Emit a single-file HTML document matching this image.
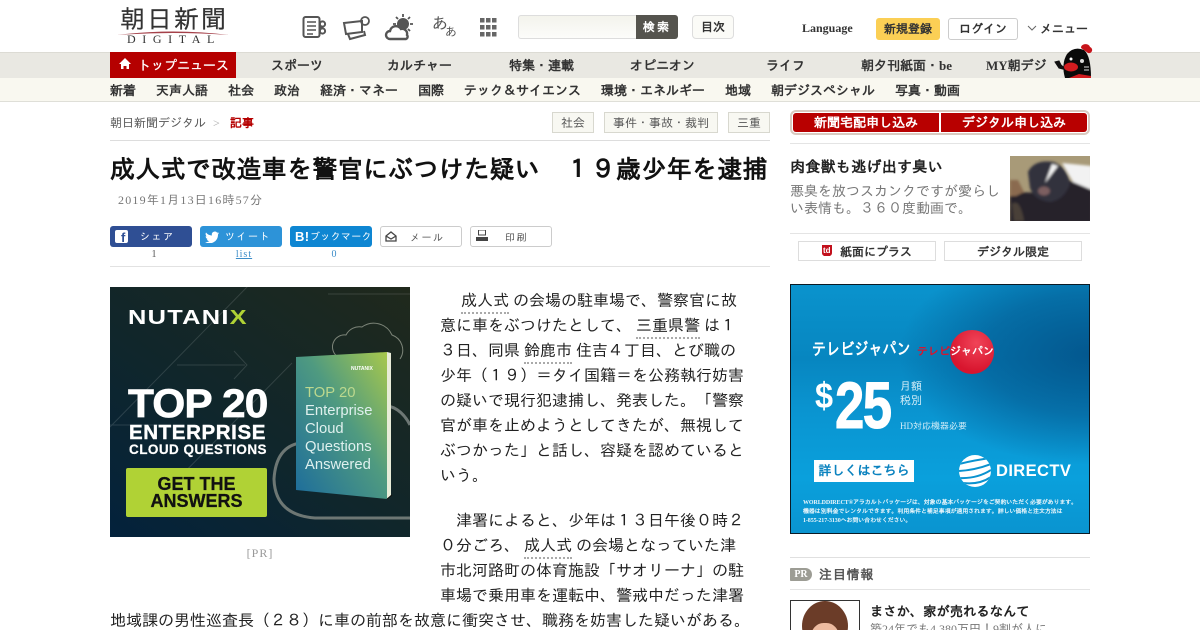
<!DOCTYPE html>
<html lang="ja"><head><meta charset="utf-8"><title>成人式で改造車を警官にぶつけた疑い</title>
<style>
html{margin:0;padding:0;width:1200px;height:630px;overflow:hidden;background:#fff}
body{margin:0;padding:0;width:1200px;height:630px;overflow:hidden;background:#fff;position:relative;font-family:"Liberation Serif","IPAGothic",serif;color:#222}
.a{position:absolute;white-space:nowrap}
.c{text-align:center}
u{text-decoration:none;border-bottom:2px dotted #aaa;padding-bottom:2px}
.btn{position:absolute;top:226px;width:82px;height:21px;border-radius:3px;color:#fff;font-size:10px;line-height:24px;box-sizing:border-box;letter-spacing:1.5px}
.nv1{position:absolute;top:52px;height:25px;line-height:27px;font-size:13px;font-weight:bold;color:#333;white-space:nowrap}
.nv2{position:absolute;top:78px;height:23px;line-height:25px;font-size:13px;font-weight:bold;color:#333;white-space:nowrap}
.tag{position:absolute;top:112px;height:19px;line-height:21px;border:1px solid #d8d8cf;background:#f8f8f2;font-size:12px;color:#555;text-align:center;box-sizing:content-box}
</style></head><body>

<!-- header logo -->
<div class="a" style="left:120px;top:6px;font-size:25px;line-height:30px;color:#333;letter-spacing:2px;-webkit-text-stroke:.2px #333">朝日新聞</div>
<svg class="a" style="left:116px;top:28px" width="114" height="10"><path d="M1 7Q57 0 113 7Q57 3 1 7Z" fill="#a5414a"/></svg>
<div class="a" style="left:127px;top:32px;font-size:12px;line-height:14px;letter-spacing:6.600px;color:#333">DIGITAL</div>

<!-- icons -->
<svg class="a" style="left:300px;top:12px" width="210" height="30" fill="none" stroke="#555" stroke-width="2">
<rect x="3.500" y="5" width="16" height="20" rx="2"/>
<path d="M7 10h9M7 14h9M7 18h9M7 22h6" stroke-width="1.600"/>
<circle cx="22.500" cy="12" r="2.600"/><circle cx="22.500" cy="19" r="2.600"/><path d="M19 15.500h4"/>
<path d="M44 11L62 9V20L46 22z" stroke-width="2"/><path d="M48 22l2 5 15-4-1-4" stroke-width="2"/><circle cx="65" cy="9" r="4" stroke-width="1.800"/>
<circle cx="103" cy="12" r="6" fill="#555" stroke="none"/>
<path d="M103 2v3M113 12h-3M110 5l-2 2M110 19l-2-2M96 5l2 2M93 12h3" stroke-width="1.800"/>
<path d="M90 27a4 4 0 0 1 0-8 6 6 0 0 1 11-2 5 5 0 0 1 6 6 2.500 2.500 0 0 1-1 4z" fill="#fff" stroke-width="2.400"/>
<g fill="#666" stroke="none"><rect x="180" y="6" width="4.500" height="4.500"/><rect x="186" y="6" width="4.500" height="4.500"/><rect x="192" y="6" width="4.500" height="4.500"/><rect x="180" y="13" width="4.500" height="4.500"/><rect x="186" y="13" width="4.500" height="4.500"/><rect x="192" y="13" width="4.500" height="4.500"/><rect x="180" y="20" width="4.500" height="4.500"/><rect x="186" y="20" width="4.500" height="4.500"/><rect x="192" y="20" width="4.500" height="4.500"/></g>
</svg>
<div class="a" style="left:432px;top:15px;font-size:16px;line-height:20px;color:#555">あ</div>
<div class="a" style="left:445px;top:25px;font-size:12px;line-height:15px;color:#555">あ</div>

<!-- search -->
<div class="a" style="left:518px;top:15px;width:119px;height:24px;border:1px solid #ddd;border-right:0;border-radius:3px 0 0 3px;background:linear-gradient(#f3f3ec,#fcfcfa);box-sizing:border-box"></div>
<div class="a c" style="left:636px;top:15px;width:42px;height:24px;background:#55544e;border-radius:0 3px 3px 0;color:#fff;font-size:12px;font-weight:bold;line-height:24px;letter-spacing:2px">検索</div>
<div class="a c" style="left:692px;top:15px;width:42px;height:24px;box-sizing:border-box;border:1px solid #ddd;border-radius:4px;background:#fbfbf7;font-size:12px;font-weight:bold;line-height:23px;color:#333">目次</div>
<div class="a" style="left:802px;top:20px;font-size:12px;font-weight:bold;line-height:16px;color:#333">Language</div>
<div class="a c" style="left:876px;top:18px;width:64px;height:22px;background:#fbcf55;border-radius:3px;font-size:12px;font-weight:bold;line-height:23px;color:#333">新規登録</div>
<div class="a c" style="left:948px;top:18px;width:70px;height:22px;box-sizing:border-box;border:1px solid #ccc;border-radius:3px;font-size:12px;font-weight:bold;line-height:21px;color:#333">ログイン</div>
<svg class="a" style="left:1027px;top:25px" width="10" height="7" fill="none" stroke="#666"><path d="M1 1l4 4 4-4"/></svg>
<div class="a" style="left:1040px;top:20px;font-size:12px;font-weight:bold;line-height:18px;color:#333">メニュー</div>

<!-- nav 1 -->
<div class="a" style="left:0;top:52px;width:1200px;height:26px;background:#e9e8e2;border-top:1px solid #dcdbd4;box-sizing:border-box"></div>
<div class="a" style="left:110px;top:52px;width:126px;height:26px;background:#b50000"></div>
<svg class="a" style="left:119px;top:58px" width="12" height="12"><path d="M6 0L12 6H10V11H7.500V8H4.500V11H2V6H0Z" fill="#fff"/></svg>
<div class="nv1" style="left:138px;color:#fff;font-weight:normal;-webkit-text-stroke:.3px #fff">トップニュース</div>
<div class="nv1" style="left:271px">スポーツ</div>
<div class="nv1" style="left:387px">カルチャー</div>
<div class="nv1" style="left:509px">特集・連載</div>
<div class="nv1" style="left:630px">オピニオン</div>
<div class="nv1" style="left:766px">ライフ</div>
<div class="nv1" style="left:861px">朝夕刊紙面・be</div>
<div class="nv1" style="left:986px">MY朝デジ</div>
<svg class="a" style="left:1052px;top:42px" width="42" height="36"><path d="M13 36Q9 22 15 12Q22 4 32 8Q39 14 39 36Z" fill="#0a0a0a"/><path d="M29 6a4 3 0 0 1 9-1 3 3 0 0 1-2 6" fill="#c7141a"/><path d="M3 20l4 6 8 2-6-5-2-4z" fill="#111" stroke="#111"/><ellipse cx="19" cy="25" rx="7" ry="4.500" fill="#d21c1f"/><path d="M17 36l10-4 12 2v2z" fill="#d21c1f"/><circle cx="19" cy="17" r="1.500" fill="#fff"/><circle cx="30" cy="19" r="2" fill="#ddd"/><path d="M32 25h5M32 28h5" stroke="#ddd"/></svg>

<!-- nav 2 -->
<div class="a" style="left:0;top:78px;width:1200px;height:24px;background:#f9f8f0;border-bottom:1px solid #dfdfd8;box-sizing:border-box"></div>
<div class="nv2" style="left:110px">新着</div>
<div class="nv2" style="left:156px">天声人語</div>
<div class="nv2" style="left:228px">社会</div>
<div class="nv2" style="left:274px">政治</div>
<div class="nv2" style="left:320px">経済・マネー</div>
<div class="nv2" style="left:418px">国際</div>
<div class="nv2" style="left:464px">テック＆サイエンス</div>
<div class="nv2" style="left:601px">環境・エネルギー</div>
<div class="nv2" style="left:725px">地域</div>
<div class="nv2" style="left:771px">朝デジスペシャル</div>
<div class="nv2" style="left:895px">写真・動画</div>

<!-- breadcrumb -->
<div class="a" style="left:110px;top:115px;font-size:12px;line-height:16px;color:#555">朝日新聞デジタル</div>
<div class="a" style="left:213px;top:115px;font-size:12px;line-height:16px;color:#aaa">&gt;</div>
<div class="a" style="left:230px;top:115px;font-size:12px;line-height:16px;color:#b50000;font-weight:bold">記事</div>
<div class="tag" style="left:552px;width:40px">社会</div>
<div class="tag" style="left:604px;width:112px">事件・事故・裁判</div>
<div class="tag" style="left:728px;width:40px">三重</div>
<div class="a" style="left:110px;top:140px;width:660px;height:1px;background:#ddd"></div>

<!-- title -->
<div class="a" style="left:110px;top:155px;font-size:25px;letter-spacing:.3px;line-height:32px;font-weight:bold;color:#111">成人式で改造車を警官にぶつけた疑い　１９歳少年を逮捕</div>
<div class="a" style="left:118px;top:192px;font-size:12px;line-height:16px;letter-spacing:1.200px;color:#777">2019年1月13日16時57分</div>

<!-- share -->
<div class="btn" style="left:110px;background:#2f4f94"><span style="position:absolute;left:5px;top:4px;width:13px;height:13px;background:#fff;border-radius:2px"></span><span style="position:absolute;left:11px;top:4px;font:bold 13px/15px 'Liberation Sans',sans-serif;color:#2f4f94">f</span><span style="position:absolute;left:30px;top:0">シェア</span></div>
<div class="btn" style="left:200px;background:#2d93d8"><svg style="position:absolute;left:5px;top:5px" width="14" height="12"><path d="M14 2l-1.600.4L14 1l-1.800.7A3 3 0 0 0 7 4.500 8 8 0 0 1 1 1.500a3 3 0 0 0 1 4L.7 5.100a3 3 0 0 0 2.300 3H1.800a3 3 0 0 0 2.700 2A6 6 0 0 1 0 11a8.500 8.500 0 0 0 13-7.500z" fill="#fff"/></svg><span style="position:absolute;left:25px;top:0">ツイート</span></div>
<div class="btn" style="left:290px;background:#0e86d2;letter-spacing:.3px"><span style="position:absolute;left:5px;top:0;font:bold 13px/21px 'Liberation Sans',sans-serif">B!</span><span style="position:absolute;left:20px;top:0">ブックマーク</span></div>
<div class="btn" style="left:380px;border:1px solid #ccc;color:#555;line-height:23px"><svg style="position:absolute;left:4px;top:4px" width="12" height="11" fill="none" stroke="#444" stroke-width="1.300"><path d="M1 5L6 1l5 4v5H1zM1 5l5 3 5-3"/></svg><span style="position:absolute;left:29px;top:0">メール</span></div>
<div class="btn" style="left:470px;border:1px solid #ccc;color:#555;line-height:23px"><svg style="position:absolute;left:5px;top:3px" width="12" height="12"><path d="M2.500 0h7v5h-7z" fill="none" stroke="#444"/><path d="M0 7h12v4H0z" fill="#444"/></svg><span style="position:absolute;left:34px;top:0">印刷</span></div>
<div class="a c" style="left:110px;top:248px;width:88px;font-size:10px;line-height:14px;color:#555">1</div>
<div class="a c" style="left:200px;top:248px;width:88px;font-size:10px;line-height:14px;color:#3b8cc8;letter-spacing:1px;text-decoration:underline">list</div>
<div class="a c" style="left:290px;top:248px;width:88px;font-size:10px;line-height:14px;color:#3b8cc8">0</div>
<div class="a" style="left:110px;top:266px;width:660px;height:1px;background:#e2e2e2"></div>

<!-- nutanix ad -->
<div class="a" style="left:110px;top:287px;width:300px;height:250px;overflow:hidden;background:linear-gradient(35deg,#03223c 0%,#10262b 45%,#20291c 100%)">
<svg class="a" style="left:0;top:0" width="300" height="250" fill="none">
<path d="M0 140L140 -3M67 78H135M124 64l13 14-13 14M60 200L182 76M218 7H300M0 138H60" stroke="#fff" stroke-opacity=".13"/>
<path d="M228 70a12 12 0 0 1 8-22 15 15 0 0 1 16-8 20 20 0 0 1 30 8 16 16 0 0 1 8 24" stroke="#7d8579" stroke-width="1"/>
<path d="M300 231H205Q165 228 164 192Q166 160 190 156" stroke="#6d7774" stroke-width="3"/>
<path d="M270 118Q290 118 300 138" stroke="#6d7774" stroke-width="3"/>
<defs><linearGradient id="bk" x1="1" y1="0" x2="0" y2="1"><stop offset="0" stop-color="#a8c84c"/><stop offset=".45" stop-color="#4f9a80"/><stop offset="1" stop-color="#1c6c9c"/></linearGradient></defs>
<path d="M186 70L277 65L277 212L186 203Z" fill="url(#bk)"/>
<path d="M277 65l4 1V208l-4 4z" fill="#e8ecd8"/>
<path d="M277 212l5-4" stroke="#111"/>
</svg>
<div class="a" style="left:18px;top:19px;font:bold 20px/24px 'Liberation Sans',sans-serif;color:#fff;letter-spacing:1px;transform:scaleX(1.270);transform-origin:left">NUTANI<span style="color:#b0d235">X</span></div>
<div class="a" style="left:18px;top:95px;font:bold 40px/44px 'Liberation Sans',sans-serif;color:#fff;letter-spacing:-.8px;-webkit-text-stroke:.7px #fff;transform:scaleX(1.060);transform-origin:left">TOP 20</div>
<div class="a" style="left:19px;top:134px;font:bold 20.500px/24px 'Liberation Sans',sans-serif;color:#fff;letter-spacing:.6px;-webkit-text-stroke:.4px #fff">ENTERPRISE</div>
<div class="a" style="left:19px;top:154px;font:bold 13.500px/18px 'Liberation Sans',sans-serif;color:#fff;letter-spacing:.45px;-webkit-text-stroke:.2px #fff">CLOUD QUESTIONS</div>
<div class="a c" style="left:16px;top:181px;width:141px;height:49px;background:#b0d235;border-radius:2px;font:bold 18px/17px 'Liberation Sans',sans-serif;color:#111;padding-top:8px;box-sizing:border-box;-webkit-text-stroke:.3px #111">GET THE<br>ANSWERS</div>
<div class="a" style="left:241px;top:79px;font:bold 5px/6px 'Liberation Sans',sans-serif;color:#fff">NUTANIX</div>
<div class="a" style="left:195px;top:97px;font:14.800px/18px 'Liberation Sans',sans-serif;color:#bcd88e">TOP 20<br><span style="color:#dff0ee">Enterprise<br>Cloud<br>Questions<br>Answered</span></div>
</div>
<div class="a c" style="left:110px;top:545px;width:300px;font-size:12px;line-height:16px;color:#999;letter-spacing:1px">[PR]</div>

<!-- article -->
<div class="a" style="left:440px;top:289px;font-size:16px;line-height:25px;color:#222"><span style="margin-left:21px"><u>成人式</u></span> の会場の駐車場で、警察官に故<br>意に車をぶつけたとして、 <u>三重県警</u> は１<br>３日、同県 <u>鈴鹿市</u> 住吉４丁目、とび職の<br>少年（１９）＝タイ国籍＝を公務執行妨害<br>の疑いで現行犯逮捕し、発表した。「警察<br>官が車を止めようとしてきたが、無視して<br>ぶつかった」と話し、容疑を認めていると<br>いう。</div>
<div class="a" style="left:440px;top:509px;font-size:16px;line-height:25px;color:#222">　津署によると、少年は１３日午後０時２<br>０分ごろ、 <u>成人式</u> の会場となっていた津<br>市北河路町の体育施設「サオリーナ」の駐<br>車場で乗用車を運転中、警戒中だった津署</div>
<div class="a" style="left:110px;top:609px;font-size:16px;line-height:25px;color:#222">地域課の男性巡査長（２８）に車の前部を故意に衝突させ、職務を妨害した疑いがある。</div>

<!-- right column -->
<div class="a" style="left:790px;top:110px;width:300px;height:25px;box-sizing:border-box;border:2px solid #d9c9bf;border-radius:6px;background:#fff"></div>
<div class="a c" style="left:793px;top:113px;width:146px;height:19px;background:#b80000;border-radius:3px 0 0 3px;color:#fff;font-size:13px;font-weight:bold;line-height:20px">新聞宅配申し込み</div>
<div class="a c" style="left:941px;top:113px;width:146px;height:19px;background:#b80000;border-radius:0 3px 3px 0;color:#fff;font-size:13px;font-weight:bold;line-height:20px">デジタル申し込み</div>
<div class="a" style="left:790px;top:143px;width:300px;height:1px;background:#e4e4e4"></div>
<div class="a" style="left:790px;top:158px;font-size:15px;letter-spacing:.3px;font-weight:bold;line-height:20px;color:#222">肉食獣も逃げ出す臭い</div>
<div class="a" style="left:790px;top:184px;font-size:14px;line-height:17px;color:#777">悪臭を放つスカンクですが愛らし<br>い表情も。３６０度動画で。</div>
<svg class="a" style="left:1010px;top:156px" width="80" height="65"><defs><filter id="bl"><feGaussianBlur stdDeviation="1.200"/></filter></defs><rect width="80" height="65" fill="#a89a78"/><g filter="url(#bl)"><path d="M52 7L82 10V34L66 31z" fill="#f2f2f2"/><path d="M0 38Q20 34 40 40L58 24L82 34V67H0Z" fill="#25242a"/><path d="M0 24L8 24L14 36L6 40H0z" fill="#8a6a50"/><path d="M18 16Q24 3 44 6Q58 12 60 28Q54 44 40 46Q24 44 20 32z" fill="#33323c"/><path d="M42 8L35 27L48 10z" fill="#f4f4f4"/><ellipse cx="34" cy="35" rx="6" ry="4.500" fill="#7b5f60"/><path d="M2 48Q10 42 14 65H4z" fill="#4a4038"/></g></svg>
<div class="a" style="left:790px;top:233px;width:300px;height:1px;background:#e4e4e4"></div>
<div class="a c" style="left:798px;top:241px;width:138px;height:20px;box-sizing:border-box;border:1px solid #ddd;font-size:12px;font-weight:bold;line-height:21px;color:#333;padding-left:18px">紙面にプラス</div>
<svg class="a" style="left:821px;top:244px" width="12" height="13"><path d="M1 1h10v8q0 2-2 3H3q-2-1-2-3z" fill="#c2101c"/><text x="2" y="9" font-size="8" font-family="Liberation Sans" font-weight="bold" fill="#fff">td</text></svg>
<div class="a c" style="left:944px;top:241px;width:138px;height:20px;box-sizing:border-box;border:1px solid #ddd;font-size:12px;font-weight:bold;line-height:21px;color:#333">デジタル限定</div>

<!-- directv ad -->
<div class="a" style="left:790px;top:284px;width:300px;height:250px;box-sizing:border-box;border:1px solid #0a1a25;overflow:hidden;background:radial-gradient(ellipse 190px 110px at 100% 28%,#03588f 0%,rgba(3,88,143,.6) 55%,rgba(3,88,143,0) 100%),linear-gradient(#0a93cd 0%,#0786c0 30%,#0a94d0 50%,#0aa0dc 78%,#0a94d0 100%)">
<div class="a" style="left:21px;top:53px;font-size:17px;font-weight:bold;line-height:24px;color:#fff;transform:scaleX(.83);transform-origin:left">テレビジャパン</div>
<div class="a" style="left:159px;top:45px;width:44px;height:44px;border-radius:50%;background:radial-gradient(circle at 60% 30%,#f04458,#d8152e 70%)"></div>
<div class="a" style="left:126px;top:59px;font-size:11px;font-weight:bold;line-height:16px;color:#d8152e">テレビ<span style="color:#fff">ジャパン</span></div>
<div class="a" style="left:24px;top:93px;font:bold 36px/36px 'Liberation Sans',sans-serif;color:#fff;transform:scaleX(.9);transform-origin:left">$</div>
<div class="a" style="left:44px;top:87px;font:bold 66px/66px 'Liberation Sans',sans-serif;color:#fff;letter-spacing:-2px;-webkit-text-stroke:1px #fff;transform:scaleX(.8);transform-origin:left">25</div>
<div class="a" style="left:109px;top:95px;font-size:11px;line-height:14px;color:#d5eef8">月額<br>税別</div>
<div class="a" style="left:109px;top:135px;font-size:9px;line-height:12px;color:#d5eef8">HD対応機器必要</div>
<div class="a c" style="left:23px;top:175px;width:100px;height:22px;background:#fff;color:#0a82bf;font-size:13px;font-weight:bold;line-height:22px">詳しくはこちら</div>
<svg class="a" style="left:168px;top:170px" width="32" height="32"><defs><clipPath id="gl"><circle cx="16" cy="16" r="16"/></clipPath></defs><circle cx="16" cy="16" r="16" fill="#fff"/><g clip-path="url(#gl)" stroke="#0a92cf" stroke-width="2" fill="none"><path d="M0 9Q16 5 32 3M0 16Q16 15 32 9M0 23Q18 24 32 15M4 28Q20 30 32 22"/></g></svg>
<div class="a" style="left:205px;top:176px;font:bold 16.500px/20px 'Liberation Sans',sans-serif;color:#fff;letter-spacing:.4px">DIRECTV</div>
<div class="a" style="left:12px;top:214px;font-size:6px;line-height:9px;color:#eaf6fb;font-weight:bold;letter-spacing:-.1px">WORLDDIRECT®アラカルトパッケージは、対象の基本パッケージをご契約いただく必要があります。<br>機器は別料金でレンタルできます。利用条件と補足事項が適用されます。詳しい価格と注文方法は<br>1-855-217-3130へお問い合わせください。</div>
</div>

<!-- PR section -->
<div class="a" style="left:790px;top:557px;width:300px;height:1px;background:#e0e0e0"></div>
<div class="a c" style="left:790px;top:568px;width:22px;height:13px;background:#9c9c94;border-radius:1px 7px 7px 1px;color:#fff;font:bold 10px/13px 'Liberation Serif',serif">PR</div>
<div class="a" style="left:819px;top:566px;font-size:13px;font-weight:bold;line-height:17px;color:#555;letter-spacing:.8px">注目情報</div>
<div class="a" style="left:790px;top:589px;width:300px;height:1px;background:#e4e4e4"></div>
<div class="a" style="left:790px;top:600px;width:70px;height:40px;box-sizing:border-box;border:1px solid #333;background:#fff;overflow:hidden"><div class="a" style="left:11px;top:0;width:46px;height:50px;border-radius:50%;background:#6b3c28"></div><div class="a" style="left:20px;top:22px;width:28px;height:30px;border-radius:45%;background:#eebba0"></div></div>
<div class="a" style="left:870px;top:603px;font-size:13.300px;font-weight:bold;line-height:18px;color:#222">まさか、家が売れるなんて</div>
<div class="a" style="left:870px;top:621px;font-size:12px;line-height:16px;color:#777">築24年でも4,380万円！9割が人に</div>
</body></html>
